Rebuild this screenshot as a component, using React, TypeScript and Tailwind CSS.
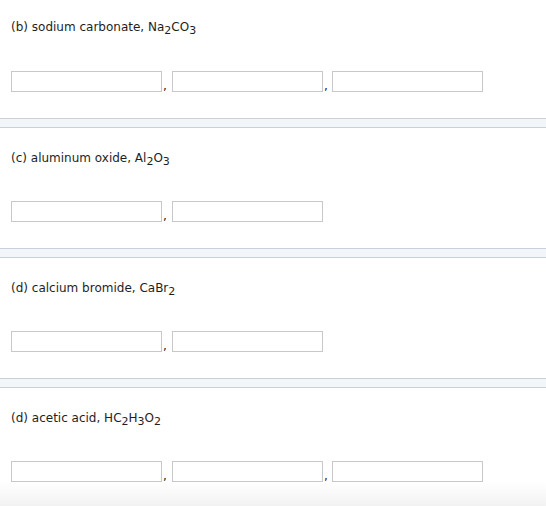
import React from 'react'

type Part = { text: string; sub?: boolean }

type Question = {
  label: Part[]
  boxes: number
  first?: boolean
  last?: boolean
}

const questions: Question[] = [
  {
    label: [
      { text: '(b) sodium carbonate, Na' },
      { text: '2', sub: true },
      { text: 'CO' },
      { text: '3', sub: true },
    ],
    boxes: 3,
    first: true,
  },
  {
    label: [
      { text: '(c) aluminum oxide, Al' },
      { text: '2', sub: true },
      { text: 'O' },
      { text: '3', sub: true },
    ],
    boxes: 2,
  },
  {
    label: [
      { text: '(d) calcium bromide, CaBr' },
      { text: '2', sub: true },
    ],
    boxes: 2,
  },
  {
    label: [
      { text: '(d) acetic acid, HC' },
      { text: '2', sub: true },
      { text: 'H' },
      { text: '3', sub: true },
      { text: 'O' },
      { text: '2', sub: true },
    ],
    boxes: 3,
    last: true,
  },
]

function Label({ parts }: { parts: Part[] }) {
  return (
    <p className="h-[16px] text-[12px] leading-[16px] text-[#1e1e1e] whitespace-nowrap">
      {parts.map((p, i) =>
        p.sub ? (
          <span key={i} className="relative top-[3px] text-[11px] leading-[16px]">
            {p.text}
          </span>
        ) : (
          <span key={i}>{p.text}</span>
        )
      )}
    </p>
  )
}

function AnswerRow({ count }: { count: number }) {
  const commaWidths = ['w-[10px]', 'w-[9px]']
  return (
    <div className="flex h-[21px] items-end">
      {Array.from({ length: count }).map((_, i) => (
        <div key={i} className="flex h-[21px] items-end">
          <input
            type="text"
            className="block w-[151px] h-[21px] border border-[#c8c8c8] bg-white outline-none"
          />
          {i < count - 1 && (
            <span
              className={`${commaWidths[i]} h-[12px] pl-[1px] text-[12px] leading-[12px] text-[#222]`}
            >
              ,
            </span>
          )}
        </div>
      ))}
    </div>
  )
}

function Divider() {
  return (
    <div className="h-[10px] border-t border-b border-[#c9d0da] bg-[#f3f6f9]" />
  )
}

export default function App() {
  return (
    <main
      className="w-[546px] h-[506px] overflow-hidden bg-white"
      style={{ fontFamily: '"DejaVu Sans", Verdana, sans-serif' }}
    >
      {questions.map((q, i) => (
        <div key={i}>
          <section
            className={`pl-[11px] ${q.first ? 'pt-[19px]' : 'pt-[22px]'} ${
              q.last ? 'pb-0' : 'pb-[26px]'
            }`}
          >
            <Label parts={q.label} />
            <div className={q.first ? 'mt-[36px]' : 'mt-[35px]'}>
              <AnswerRow count={q.boxes} />
            </div>
          </section>
          {q.last ? (
            <div className="h-[30px] bg-gradient-to-b from-white to-[#efefef]" />
          ) : (
            <Divider />
          )}
        </div>
      ))}
    </main>
  )
}
